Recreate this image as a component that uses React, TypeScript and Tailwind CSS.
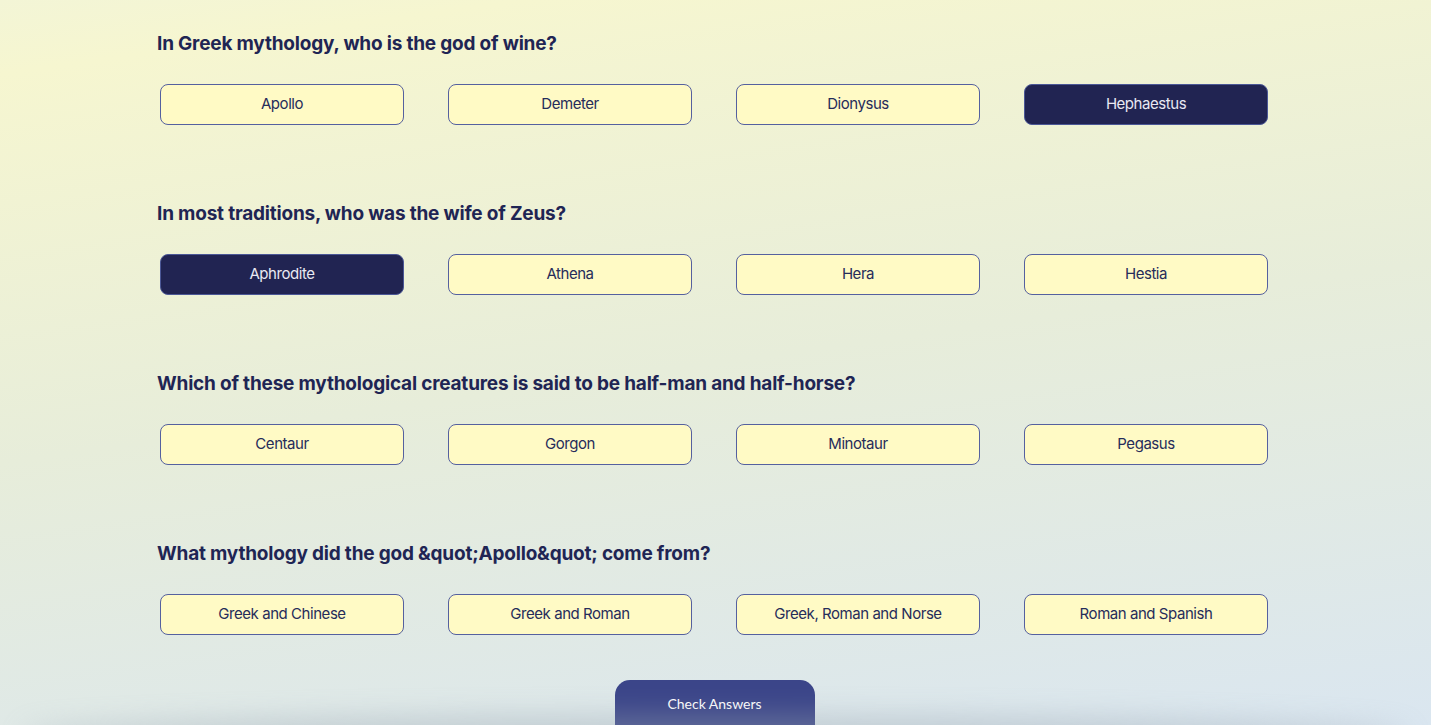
import React from "react";

const questions = [
  { q: "In Greek mythology, who is the god of wine?", a: ["Apollo", "Demeter", "Dionysus", "Hephaestus"], sel: 3 },
  { q: "In most traditions, who was the wife of Zeus?", a: ["Aphrodite", "Athena", "Hera", "Hestia"], sel: 0 },
  { q: "Which of these mythological creatures is said to be half-man and half-horse?", a: ["Centaur", "Gorgon", "Minotaur", "Pegasus"], sel: -1 },
  { q: "What mythology did the god &quot;Apollo&quot; come from?", a: ["Greek and Chinese", "Greek and Roman", "Greek, Roman and Norse", "Roman and Spanish"], sel: -1 },
];

export default function App() {
  return (
    <div
      className="relative w-full h-[725px] overflow-hidden bg-[linear-gradient(172deg,#f3f5d6_0%,#f6f6d0_8%,#e7edda_50%,#dae6f0_100%)]"
      style={{ fontFamily: "Inter, 'Noto Sans', sans-serif" }}
    >
      <div className="flex flex-col pl-[157px] pt-[30px]">
        <div className="flex flex-col gap-[75px]">
          {questions.map((item, i) => (
            <div key={i} className="flex flex-col">
              <h2 className="text-[19px] leading-[28px] font-bold text-[#1f2554] tracking-[-0.2px]">{item.q}</h2>
              <div className="grid grid-cols-4 gap-[44px] w-[1108px] ml-[3px] mt-[26px]">
                {item.a.map((ans, j) => (
                  <button
                    key={j}
                    className={
                      j === item.sel
                        ? "h-[41px] rounded-[8px] border border-[#4b5796] bg-[#212452] text-[#e9e9f2] text-[15px] tracking-[-0.45px]"
                        : "h-[41px] rounded-[8px] border border-[#55609f] bg-[#fffac5] text-[#262c5a] text-[15px] tracking-[-0.45px]"
                    }
                  >
                    {ans}
                  </button>
                ))}
              </div>
            </div>
          ))}
        </div>
        <div className="flex justify-center pr-[2px] mt-[45px] ml-[-157px]">
          <button
            className="w-[200px] h-[60px] rounded-[15px] bg-[#3b4589] text-white text-[14px]"
            style={{ fontFamily: "Lato, 'Open Sans', sans-serif" }}
          >
            <span className="relative top-[-7px]">Check Answers</span>
          </button>
        </div>
      </div>
      <div className="pointer-events-none absolute left-[20px] right-[20px] bottom-[-30px] h-[40px] rounded-[50%] bg-[#9aa6b0] opacity-40 blur-[14px]" />
    </div>
  );
}
